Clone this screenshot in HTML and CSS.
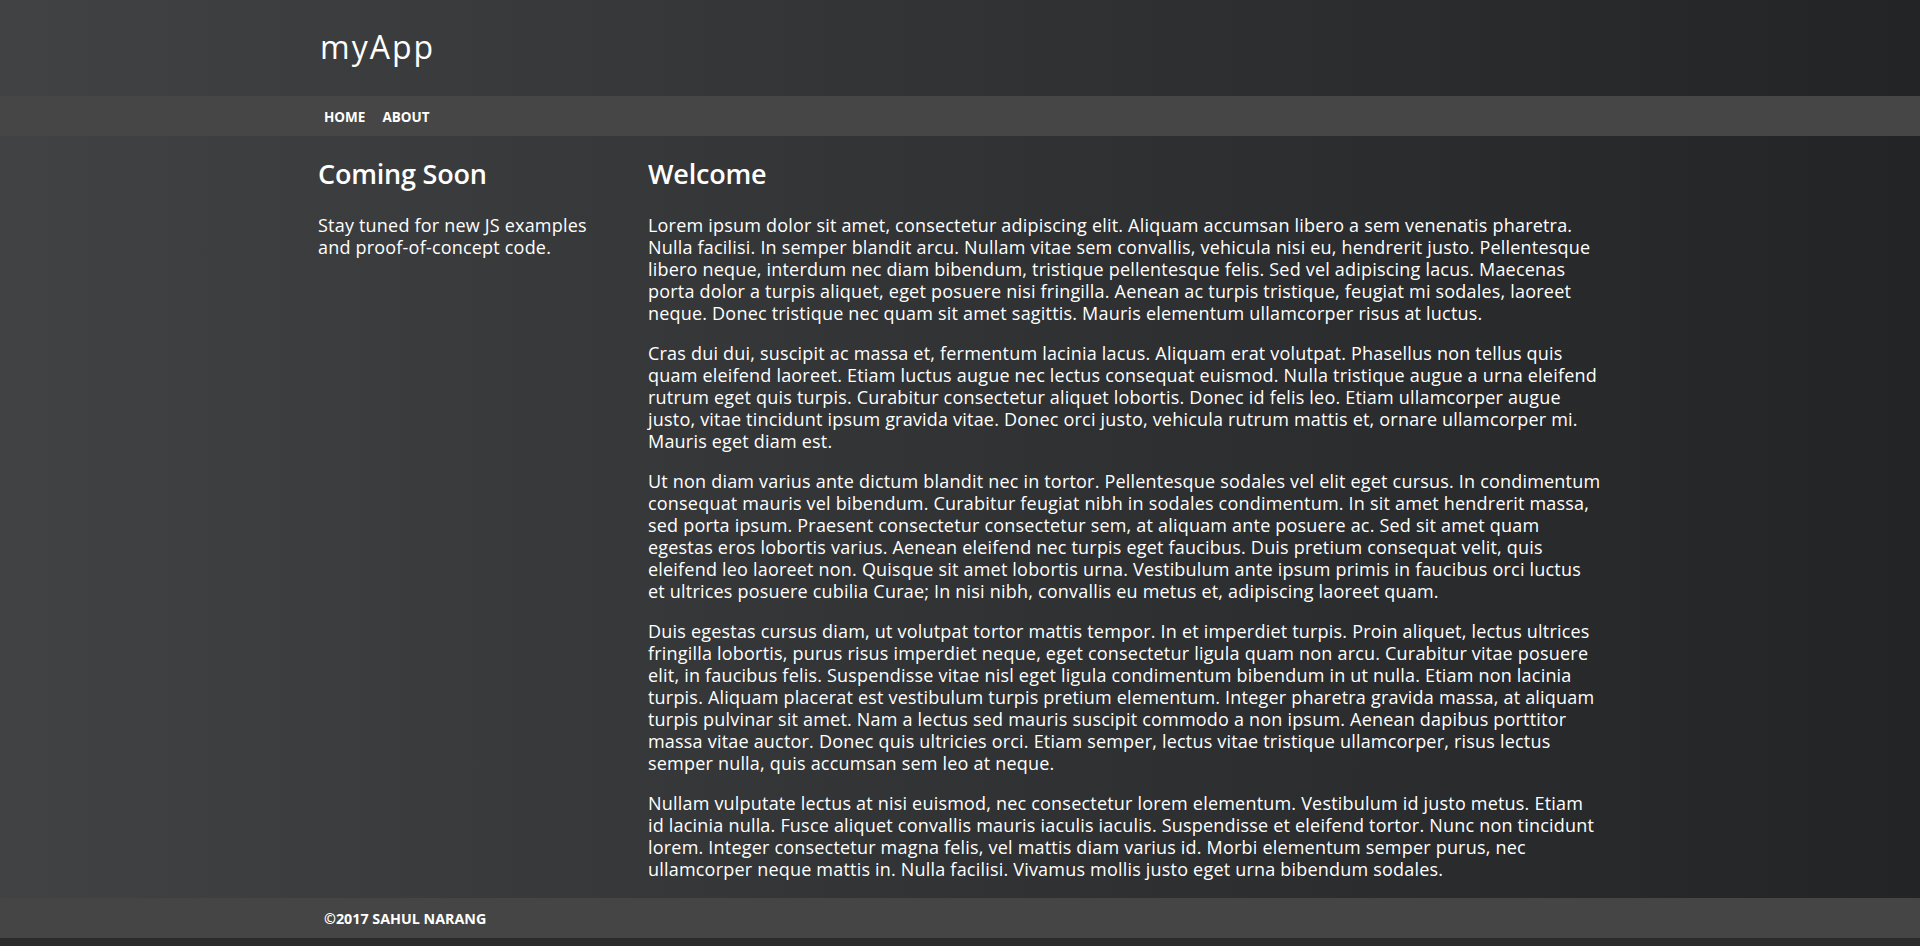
FILE: index.html
```html
<!DOCTYPE html>
<html lang="en">
<head>
<meta charset="utf-8">
<title>myApp</title>
<link rel="stylesheet" href="styles.css">
</head>
<body>
<div class="page">
  <header class="site-header">
    <div class="container">
      <h1 class="brand">myApp</h1>
    </div>
  </header>
  <nav class="site-nav">
    <div class="container nav-links">
      <a href="#" class="nav-link">HOME</a>
      <a href="#" class="nav-link">ABOUT</a>
    </div>
  </nav>
  <main class="main">
    <div class="container grid">
      <aside class="sidebar">
        <h2 class="heading">Coming Soon</h2>
        <p class="text">Stay tuned for new JS examples and proof-of-concept code.</p>
      </aside>
      <section class="content">
        <h2 class="heading">Welcome</h2>
        <p class="text">Lorem ipsum dolor sit amet, consectetur adipiscing elit. Aliquam accumsan libero a sem venenatis pharetra. Nulla facilisi. In semper blandit arcu. Nullam vitae sem convallis, vehicula nisi eu, hendrerit justo. Pellentesque libero neque, interdum nec diam bibendum, tristique pellentesque felis. Sed vel adipiscing lacus. Maecenas porta dolor a turpis aliquet, eget posuere nisi fringilla. Aenean ac turpis tristique, feugiat mi sodales, laoreet neque. Donec tristique nec quam sit amet sagittis. Mauris elementum ullamcorper risus at luctus.</p>
        <p class="text">Cras dui dui, suscipit ac massa et, fermentum lacinia lacus. Aliquam erat volutpat. Phasellus non tellus quis quam eleifend laoreet. Etiam luctus augue nec lectus consequat euismod. Nulla tristique augue a urna eleifend rutrum eget quis turpis. Curabitur consectetur aliquet lobortis. Donec id felis leo. Etiam ullamcorper augue justo, vitae tincidunt ipsum gravida vitae. Donec orci justo, vehicula rutrum mattis et, ornare ullamcorper mi. Mauris eget diam est.</p>
        <p class="text">Ut non diam varius ante dictum blandit nec in tortor. Pellentesque sodales vel elit eget cursus. In condimentum consequat mauris vel bibendum. Curabitur feugiat nibh in sodales condimentum. In sit amet hendrerit massa, sed porta ipsum. Praesent consectetur consectetur sem, at aliquam ante posuere ac. Sed sit amet quam egestas eros lobortis varius. Aenean eleifend nec turpis eget faucibus. Duis pretium consequat velit, quis eleifend leo laoreet non. Quisque sit amet lobortis urna. Vestibulum ante ipsum primis in faucibus orci luctus et ultrices posuere cubilia Curae; In nisi nibh, convallis eu metus et, adipiscing laoreet quam.</p>
        <p class="text">Duis egestas cursus diam, ut volutpat tortor mattis tempor. In et imperdiet turpis. Proin aliquet, lectus ultrices fringilla lobortis, purus risus imperdiet neque, eget consectetur ligula quam non arcu. Curabitur vitae posuere elit, in faucibus felis. Suspendisse vitae nisl eget ligula condimentum bibendum in ut nulla. Etiam non lacinia turpis. Aliquam placerat est vestibulum turpis pretium elementum. Integer pharetra gravida massa, at aliquam turpis pulvinar sit amet. Nam a lectus sed mauris suscipit commodo a non ipsum. Aenean dapibus porttitor massa vitae auctor. Donec quis ultricies orci. Etiam semper, lectus vitae tristique ullamcorper, risus lectus semper nulla, quis accumsan sem leo at neque.</p>
        <p class="text">Nullam vulputate lectus at nisi euismod, nec consectetur lorem elementum. Vestibulum id justo metus. Etiam id lacinia nulla. Fusce aliquet convallis mauris iaculis iaculis. Suspendisse et eleifend tortor. Nunc non tincidunt lorem. Integer consectetur magna felis, vel mattis diam varius id. Morbi elementum semper purus, nec ullamcorper neque mattis in. Nulla facilisi. Vivamus mollis justo eget urna bibendum sodales.</p>
      </section>
    </div>
  </main>
  <footer class="site-footer">
    <div class="container">
      <span class="footer-text">©2017 SAHUL NARANG</span>
    </div>
  </footer>
  <div class="bottom-strip"></div>
</div>
</body>
</html>
```

FILE: styles.css
```css
html, body {
  margin: 0;
  padding: 0;
  height: 946px;
  overflow: hidden;
}

body {
  background: linear-gradient(to right, #414244 0%, #333436 45%, #232426 100%);
  color: #ffffff;
  font-family: "Open Sans", "Noto Sans", sans-serif;
}

.page {
  display: flex;
  flex-direction: column;
  height: 946px;
}

.container {
  width: 1284px;
  margin: 0 auto;
  box-sizing: border-box;
}

.site-header {
  height: 97px;
  display: flex;
  align-items: center;
}

.brand {
  margin: 0;
  padding: 0 0 3px 2px;
  font-size: 32px;
  font-weight: 400;
  line-height: 40px;
  letter-spacing: 2px;
}

.site-nav {
  height: 40px;
  background: #464646;
  display: flex;
  align-items: center;
}

.nav-links {
  display: flex;
  gap: 5px;
  padding-top: 2px;
}

.nav-link {
  color: #ffffff;
  text-decoration: none;
  font-size: 13.5px;
  font-weight: 700;
  padding: 0 6px;
  line-height: 20px;
}

.main {
  flex: 1;
  padding-top: 21px;
}

.grid {
  display: grid;
  grid-template-columns: 300px 954px;
  column-gap: 30px;
}

.heading {
  margin: 0 0 23px;
  font-size: 27px;
  font-weight: 600;
  line-height: 34px;
  letter-spacing: -0.2px;
}

.text {
  margin: 0 0 18px;
  font-size: 18px;
  line-height: 22px;
  letter-spacing: 0.2px;
}

.site-footer {
  height: 40px;
  background: #454545;
  display: flex;
  align-items: center;
  flex-shrink: 0;
}

.footer-text {
  display: inline-block;
  padding-left: 6px;
  font-size: 14.3px;
  font-weight: 700;
}

.bottom-strip {
  height: 8px;
  background: #2b2b2b;
  flex-shrink: 0;
}
```
